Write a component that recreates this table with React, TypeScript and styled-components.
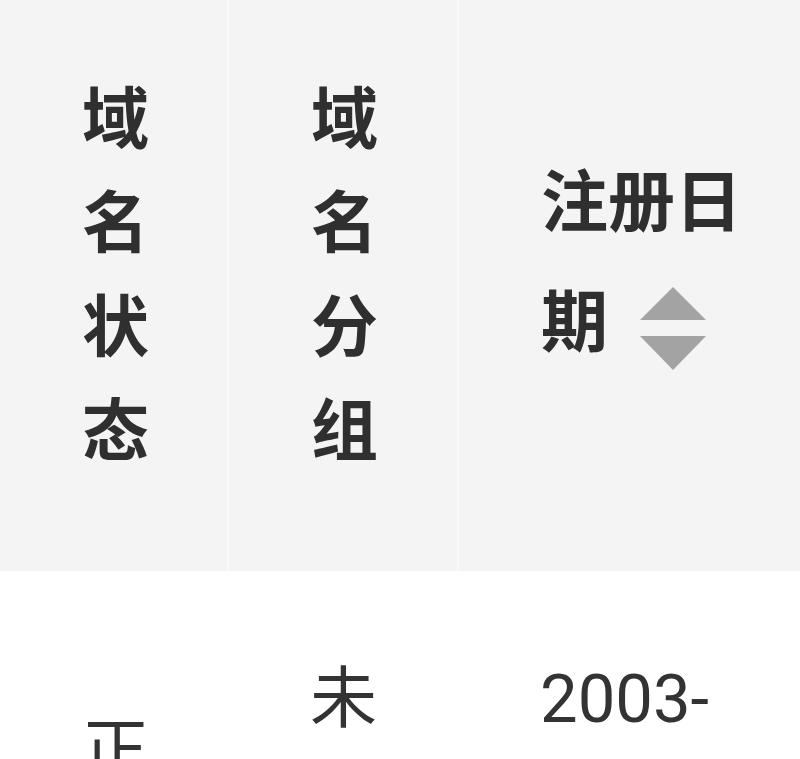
import React from "react";
import styled, { createGlobalStyle } from "styled-components";

const Global = createGlobalStyle`
  html, body {
    margin: 0;
    padding: 0;
    background: #ffffff;
    overflow: hidden;
    width: 800px;
    height: 759px;
  }
  body {
    font-family: Roboto, "Noto Sans CJK SC", sans-serif;
  }
`;

const Viewport = styled.div`
  width: 800px;
  height: 759px;
  overflow: hidden;
`;

const Table = styled.table`
  table-layout: fixed;
  border-collapse: collapse;
  width: 1150px;
`;

const Col = styled.col<{ $w: number }>`
  width: ${(p) => p.$w}px;
`;

const HeadCell = styled.th<{ $divider?: boolean }>`
  height: 571px;
  box-sizing: border-box;
  padding: 0 82px 20px 82px;
  background: #f4f4f4;
  color: #2f2f2f;
  font-family: Roboto, "Noto Sans CJK SC", sans-serif;
  font-size: 67px;
  font-weight: 700;
  line-height: 104px;
  text-align: left;
  vertical-align: middle;
  border-right: ${(p) => (p.$divider ? "2px solid #f9f9f9" : "none")};
`;

const BodyCell = styled.td`
  box-sizing: border-box;
  padding: 76px 82px;
  color: #333333;
  font-family: Roboto, "Noto Sans CJK SC", sans-serif;
  font-size: 67px;
  font-weight: 400;
  line-height: 104px;
  text-align: left;
  vertical-align: middle;
  background: #ffffff;
`;

const SortTitle = styled.span`
  display: inline;
`;

const Sorter = styled.span`
  display: inline-block;
  width: 66px;
  height: 83px;
  margin: 32px 0 31px 32px;
  vertical-align: middle;
  line-height: 0;
`;

const SortIcon = () => (
  <Sorter>
    <svg width="66" height="83" viewBox="0 0 66 83">
      <polygon points="33,0 66,33 0,33" fill="#a3a3a3" />
      <polygon points="0,49 66,49 33,83" fill="#a3a3a3" />
    </svg>
  </Sorter>
);

export default function App() {
  return (
    <Viewport>
      <Global />
      <Table>
        <colgroup>
          <Col $w={228} />
          <Col $w={230} />
          <Col $w={380} />
          <Col $w={312} />
        </colgroup>
        <thead>
          <tr>
            <HeadCell $divider>域名状态</HeadCell>
            <HeadCell $divider>域名分组</HeadCell>
            <HeadCell $divider>
              <SortTitle>注册日期</SortTitle>
              <SortIcon />
            </HeadCell>
            <HeadCell>到期日期</HeadCell>
          </tr>
        </thead>
        <tbody>
          <tr>
            <BodyCell>正常</BodyCell>
            <BodyCell>未分组</BodyCell>
            <BodyCell>2003-05-20 16:08</BodyCell>
            <BodyCell>2026-05-20</BodyCell>
          </tr>
        </tbody>
      </Table>
    </Viewport>
  );
}
